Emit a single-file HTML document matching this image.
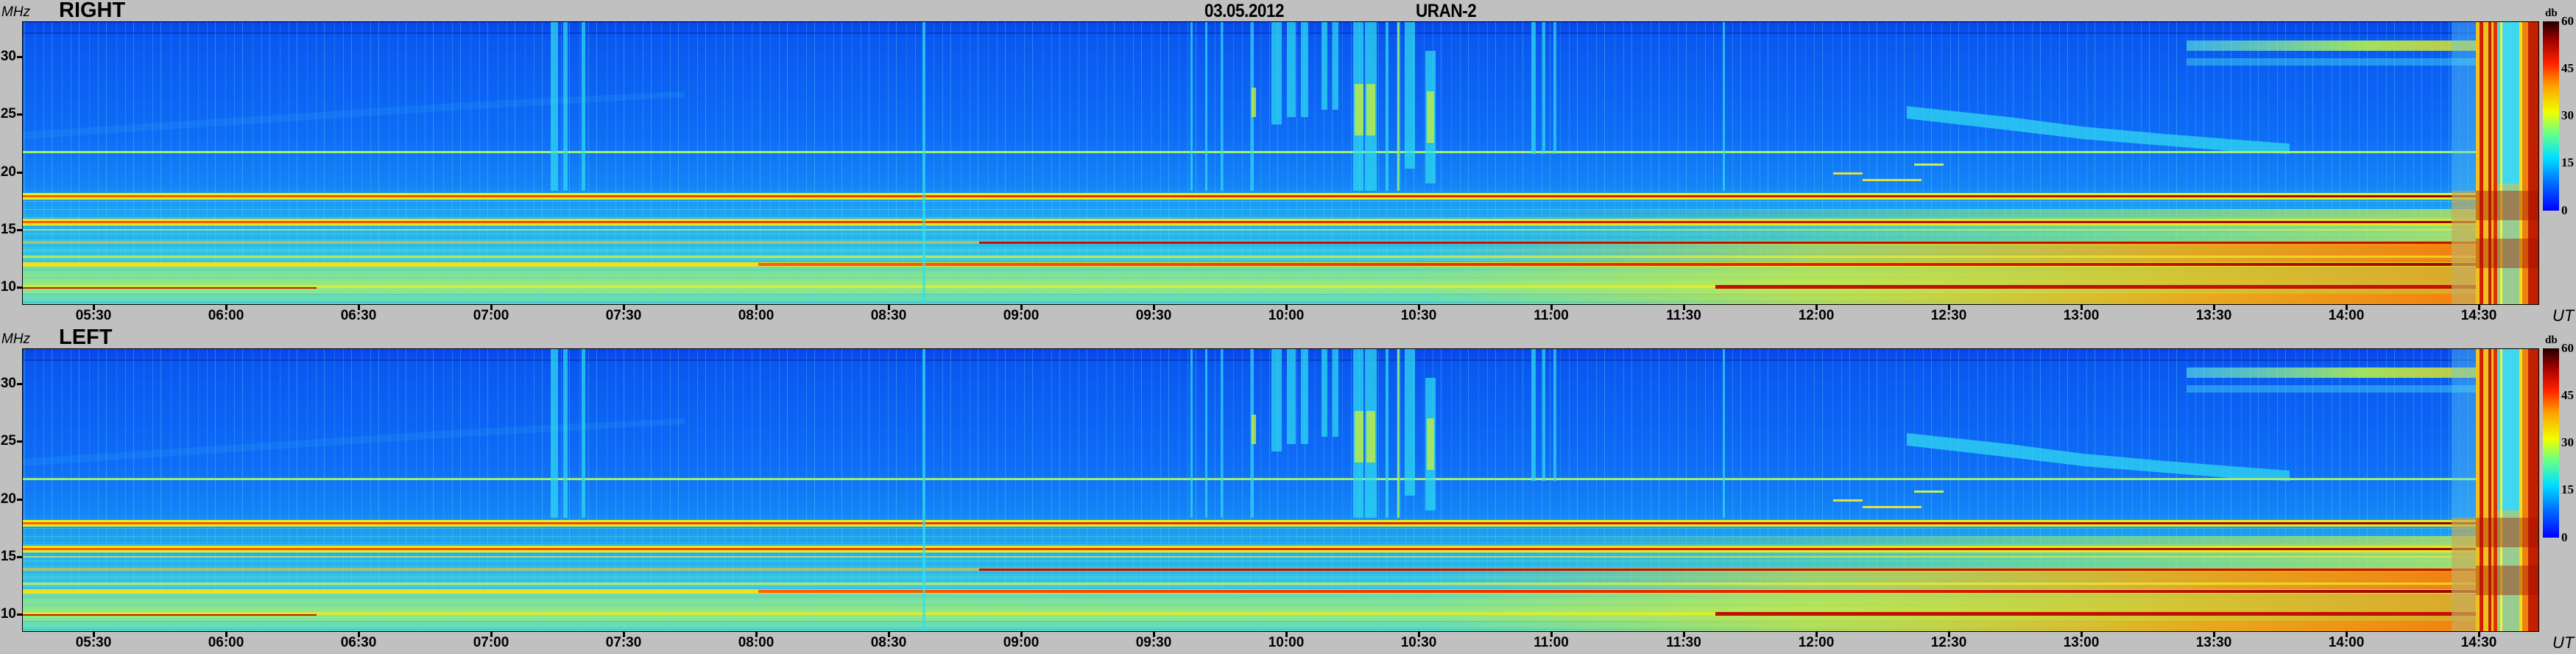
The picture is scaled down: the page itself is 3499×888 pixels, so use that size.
<!DOCTYPE html>
<html><head><meta charset="utf-8">
<style>
html,body{margin:0;padding:0;}
body{width:3499px;height:888px;background:#c0c0c0;position:relative;overflow:hidden;font-family:"Liberation Sans",Arial,sans-serif;}
.t{position:absolute;font-weight:bold;color:#000;white-space:nowrap;}
.title{font-size:29px;top:-2px;}
.hdr{font-size:25px;top:1px;letter-spacing:-0.5px;transform:scaleX(0.9);transform-origin:left top;}
.mhz{position:absolute;font-style:italic;font-size:19px;left:2px;}
.ut{position:absolute;font-style:italic;font-size:22px;left:3467px;}
.fl{position:absolute;font-weight:bold;font-size:19px;width:22px;text-align:right;left:0;}
.tk{position:absolute;font-weight:bold;font-size:19px;width:70px;text-align:center;}
.cb{position:absolute;font-family:"Liberation Serif",serif;font-weight:bold;font-size:17px;left:3479px;}
.db{position:absolute;font-family:"Liberation Serif",serif;font-weight:bold;font-size:15px;left:3457px;}
svg{position:absolute;}
</style></head><body>
<svg width="0" height="0" style="position:absolute">
<defs>
<linearGradient id="vg" x1="0" y1="0" x2="0" y2="1">
<stop offset="0" stop-color="#0644ea"/>
<stop offset="0.06" stop-color="#0a58f0"/>
<stop offset="0.4" stop-color="#0e6cf6"/>
<stop offset="0.58" stop-color="#1484f6"/>
<stop offset="0.64" stop-color="#1c9cf4"/>
<stop offset="0.75" stop-color="#24b6f0"/>
<stop offset="0.86" stop-color="#40cee0"/>
<stop offset="0.93" stop-color="#88e490"/>
<stop offset="1" stop-color="#50d8c8"/>
</linearGradient>
<pattern id="vl" width="37" height="385" patternUnits="userSpaceOnUse">
<rect x="3" y="0" width="1" height="385" fill="#60d8ff" opacity="0.35"/>
<rect x="17" y="0" width="1" height="385" fill="#60d8ff" opacity="0.2"/>
<rect x="29" y="0" width="1" height="385" fill="#60d8ff" opacity="0.28"/>
</pattern>
<pattern id="hl" width="3419" height="11" patternUnits="userSpaceOnUse">
<rect x="0" y="2" width="3419" height="1" fill="#90f0a0" opacity="0.35"/>
<rect x="0" y="7" width="3419" height="1" fill="#1070e0" opacity="0.25"/>
</pattern>
<linearGradient id="warm" x1="0" y1="0" x2="1" y2="0">
<stop offset="0" stop-color="#ffe000" stop-opacity="0"/>
<stop offset="0.35" stop-color="#ffe000" stop-opacity="0.5"/>
<stop offset="0.7" stop-color="#ffa000" stop-opacity="0.85"/>
<stop offset="1" stop-color="#ff7000" stop-opacity="0.95"/>
</linearGradient>
<linearGradient id="warm2" x1="0" y1="0" x2="1" y2="0">
<stop offset="0" stop-color="#90f060" stop-opacity="0"/>
<stop offset="0.5" stop-color="#a0f060" stop-opacity="0.5"/>
<stop offset="1" stop-color="#e0f030" stop-opacity="0.7"/>
</linearGradient>
<linearGradient id="yb" x1="0" y1="0" x2="1" y2="0">
<stop offset="0" stop-color="#60e8e0" stop-opacity="0.6"/>
<stop offset="0.5" stop-color="#b0f050" stop-opacity="0.9"/>
<stop offset="1" stop-color="#f0c020" stop-opacity="0.9"/>
</linearGradient>
<linearGradient id="redr" x1="0" y1="0" x2="1" y2="0">
<stop offset="0" stop-color="#ff6000"/>
<stop offset="0.6" stop-color="#e02000"/>
<stop offset="1" stop-color="#900000"/>
</linearGradient>
<linearGradient id="jet" x1="0" y1="1" x2="0" y2="0">
<stop offset="0" stop-color="#0000ff"/>
<stop offset="0.15" stop-color="#0070ff"/>
<stop offset="0.28" stop-color="#00e0ff"/>
<stop offset="0.4" stop-color="#60ff90"/>
<stop offset="0.52" stop-color="#f0ff00"/>
<stop offset="0.66" stop-color="#ffa000"/>
<stop offset="0.78" stop-color="#ff2000"/>
<stop offset="0.9" stop-color="#a00000"/>
<stop offset="1" stop-color="#200000"/>
</linearGradient>
<symbol id="spec" viewBox="0 0 3419 385">
<rect x="0" y="0" width="3419" height="385" fill="url(#vg)"/>
<rect x="0" y="0" width="3419" height="385" fill="url(#vl)"/>
<rect x="0" y="230" width="3419" height="155" fill="url(#hl)"/>
<polygon points="0,150 300,130 600,110 900,95 900,103 600,120 300,140 0,160" fill="#30b0f0" opacity="0.18"/>
<polygon points="2560,115 2700,130 2800,143 2900,152 3000,160 3080,166 3080,180 3000,176 2900,168 2800,160 2700,148 2560,132" fill="#30d8f0" opacity="0.75"/>
<rect x="2940" y="26" width="480" height="14" fill="url(#yb)"/>
<rect x="2940" y="50" width="480" height="10" fill="#40d0f0" opacity="0.5"/>
<rect x="2000" y="255" width="1419" height="50" fill="url(#warm2)"/>
<rect x="1900" y="300" width="1519" height="85" fill="url(#warm)"/>
<rect x="0" y="330" width="3419" height="40" fill="#b0f060" opacity="0.35"/>
<rect x="0" y="15" width="3419" height="2" fill="#0830a0" opacity="0.6"/>
<rect x="0" y="176" width="3419" height="3" fill="#a0f070"/>
<rect x="0" y="233" width="3419" height="9" fill="#e0f020"/>
<rect x="0" y="236" width="3419" height="3" fill="url(#redr)"/>
<rect x="0" y="268" width="3419" height="9" fill="#e8e820"/>
<rect x="0" y="271" width="3419" height="3" fill="url(#redr)"/>
<rect x="0" y="282" width="3419" height="2" fill="#f0f040" opacity="0.7"/>
<rect x="0" y="298" width="3419" height="4" fill="#f0c020" opacity="0.6"/>
<rect x="1300" y="299" width="2119" height="3" fill="#c01000"/>
<rect x="0" y="318" width="3419" height="3" fill="#f0f030" opacity="0.7"/>
<rect x="0" y="327" width="3419" height="6" fill="#f0e020"/>
<rect x="1000" y="328" width="2419" height="4" fill="url(#redr)"/>
<rect x="0" y="358" width="3419" height="4" fill="#f0f020" opacity="0.7"/>
<rect x="2300" y="358" width="1119" height="5" fill="#c01000"/>
<rect x="0" y="361" width="400" height="2" fill="#c02000"/>
<rect x="2460" y="205" width="40" height="3" fill="#e0e040"/>
<rect x="2500" y="214" width="80" height="3" fill="#e0e040"/>
<rect x="2570" y="193" width="40" height="3" fill="#c0f060"/>
<g fill="#30e0f0" opacity="0.7">
<rect x="718" y="0" width="10" height="230"/>
<rect x="735" y="0" width="6" height="230"/>
<rect x="760" y="0" width="5" height="230"/>
<rect x="1223" y="0" width="4" height="385"/>
<rect x="1587" y="0" width="3" height="230"/>
<rect x="1607" y="0" width="3" height="230"/>
<rect x="1628" y="0" width="3" height="230"/>
<rect x="1669" y="0" width="4" height="230"/>
<rect x="1697" y="0" width="14" height="140"/>
<rect x="1718" y="0" width="12" height="130"/>
<rect x="1737" y="0" width="10" height="130"/>
<rect x="1765" y="0" width="8" height="120"/>
<rect x="1780" y="0" width="8" height="120"/>
<rect x="1808" y="0" width="14" height="230"/>
<rect x="1824" y="0" width="16" height="230"/>
<rect x="1852" y="0" width="4" height="230"/>
<rect x="1868" y="0" width="4" height="230"/>
<rect x="1878" y="0" width="14" height="200"/>
<rect x="1906" y="40" width="14" height="180"/>
<rect x="2050" y="0" width="6" height="180"/>
<rect x="2065" y="0" width="4" height="180"/>
<rect x="2080" y="0" width="4" height="180"/>
<rect x="2310" y="0" width="3" height="230"/>
</g>
<g fill="#c0f040" opacity="0.8">
<rect x="1670" y="90" width="6" height="40"/>
<rect x="1810" y="85" width="12" height="70"/>
<rect x="1826" y="85" width="12" height="70"/>
<rect x="1908" y="95" width="10" height="70"/>
<rect x="1868" y="0" width="2" height="230"/>
</g>
<rect x="3333" y="0" width="30" height="385" fill="#f0c020"/>
<rect x="3338" y="0" width="5" height="385" fill="#d02000"/>
<rect x="3350" y="0" width="4" height="385" fill="#c02000"/>
<rect x="3357" y="0" width="5" height="385" fill="#e03000"/>
<rect x="3363" y="0" width="33" height="385" fill="#40d8f0"/>
<rect x="3363" y="220" width="33" height="165" fill="#f0c030" opacity="0.5"/>
<rect x="3366" y="0" width="3" height="385" fill="#f0f040"/>
<rect x="3392" y="0" width="4" height="385" fill="#f0e020"/>
<rect x="3396" y="0" width="23" height="385" fill="#f08010"/>
<rect x="3404" y="0" width="15" height="385" fill="#c02000"/>
<rect x="3300" y="0" width="33" height="385" fill="#60d0f0" opacity="0.4"/>
<rect x="3300" y="230" width="33" height="155" fill="#f0a020" opacity="0.5"/>
<rect x="3333" y="230" width="86" height="40" fill="#a01000" opacity="0.4"/>
<rect x="3333" y="295" width="86" height="40" fill="#a01000" opacity="0.4"/>
<rect x="0" y="0" width="3419" height="385" fill="none" stroke="#000" stroke-width="2"/>
</symbol>
</defs>
</svg>

<div class="mhz" style="top:6px">MHz</div>
<div class="t title" style="left:80px">RIGHT</div>
<div class="t hdr" style="left:1636px">03.05.2012</div>
<div class="t hdr" style="left:1923px">URAN-2</div>
<svg style="left:30px;top:29px" width="3419" height="385" viewBox="0 0 3419 385"><use href="#spec"/></svg>
<svg style="left:3454px;top:29px" width="22" height="257"><rect width="22" height="257" fill="url(#jet)"/></svg>
<div class="db" style="top:10px">db</div>
<div class="cb" style="top:19px">60</div>
<div class="cb" style="top:83px">45</div>
<div class="cb" style="top:147px">30</div>
<div class="cb" style="top:211px">15</div>
<div class="cb" style="top:276px">0</div>

<div class="mhz" style="top:450px">MHz</div>
<div class="t title" style="left:80px;top:442px">LEFT</div>
<svg style="left:30px;top:473px" width="3419" height="385" viewBox="0 0 3419 385"><use href="#spec"/></svg>
<svg style="left:3454px;top:473px" width="22" height="257"><rect width="22" height="257" fill="url(#jet)"/></svg>
<div class="db" style="top:454px">db</div>
<div class="cb" style="top:463px">60</div>
<div class="cb" style="top:527px">45</div>
<div class="cb" style="top:591px">30</div>
<div class="cb" style="top:655px">15</div>
<div class="cb" style="top:720px">0</div>

<div class="ut" style="top:416px">UT</div>
<div class="ut" style="top:860px">UT</div>

<div id="axes"></div>
<script>
(function(){
var h='';
var fr=[30,25,20,15,10];
[0,444].forEach(function(off){
  fr.forEach(function(f,i){
    var y=77+(30-f)*15.65+off;
    h+='<div class="fl" style="top:'+(y-11)+'px">'+f+'</div>';
    h+='<div style="position:absolute;left:23px;top:'+(y-1)+'px;width:7px;height:3px;background:#000"></div>';
  });
  for(var k=0;k<19;k++){
    var x=127+180*k;
    var mins=5*60+30+30*k;
    var hh=Math.floor(mins/60),mm=mins%60;
    var lab=(hh<10?'0':'')+hh+':'+(mm<10?'0':'')+mm;
    h+='<div style="position:absolute;left:'+(x-1)+'px;top:'+(414+off)+'px;width:3px;height:7px;background:#000"></div>';
    h+='<div class="tk" style="left:'+(x-35)+'px;top:'+(418+off)+'px">'+lab+'</div>';
  }
});
document.getElementById('axes').innerHTML=h;
})();
</script>
</body></html>
